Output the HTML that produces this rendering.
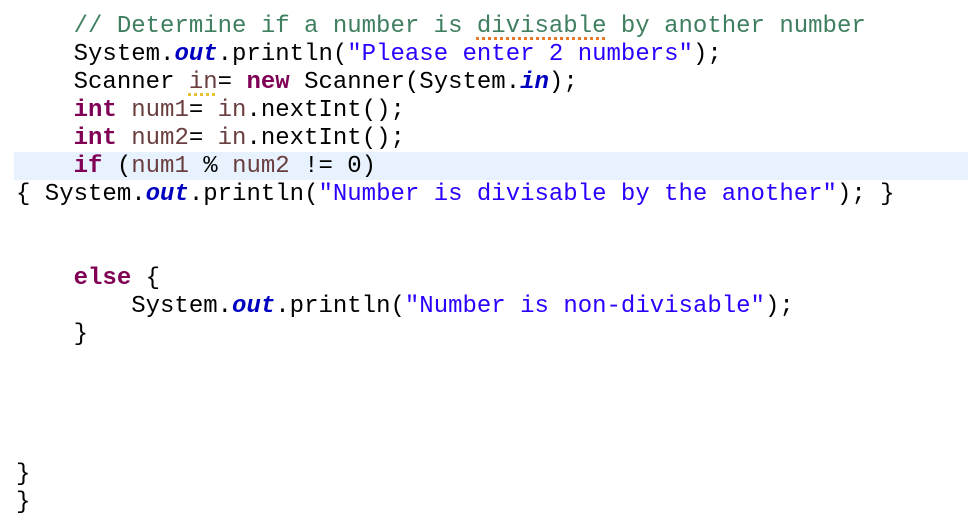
<html><head><style>
body{margin:0;width:968px;height:526px;background:#fff;overflow:hidden;position:relative;font-family:"Liberation Mono","DejaVu Sans Mono",monospace;font-size:24px;color:#000}
.hl{position:absolute;left:14px;top:152px;width:954px;height:28px;background:#e8f2fe}
pre{position:absolute;left:16px;top:13px;margin:0;font:inherit;line-height:28px;white-space:pre}
.c{color:#3f7f5f}.k{color:#7f0055;font-weight:bold}.s{color:#2a00ff}.o{color:#0000c0;font-weight:bold;font-style:italic}.v{color:#6a3e3e}
.u{text-decoration:underline dotted #e8782a 3px;text-underline-offset:5px}
.w{text-decoration:underline dotted #e8c030 3px;text-underline-offset:5px}
</style></head><body><div class="hl"></div><pre>    <span class="c">// Determine if a number is <span class="u">divisable</span> by another number</span>
    System.<span class="o">out</span>.println(<span class="s">"Please enter 2 numbers"</span>);
    Scanner <span class="v w">in</span>= <span class="k">new</span> Scanner(System.<span class="o">in</span>);
    <span class="k">int</span> <span class="v">num1</span>= <span class="v">in</span>.nextInt();
    <span class="k">int</span> <span class="v">num2</span>= <span class="v">in</span>.nextInt();
    <span class="k">if</span> (<span class="v">num1</span> % <span class="v">num2</span> != 0)
{ System.<span class="o">out</span>.println(<span class="s">"Number is divisable by the another"</span>); }


    <span class="k">else</span> {
        System.<span class="o">out</span>.println(<span class="s">"Number is non-divisable"</span>);
    }




}
}</pre></body></html>
